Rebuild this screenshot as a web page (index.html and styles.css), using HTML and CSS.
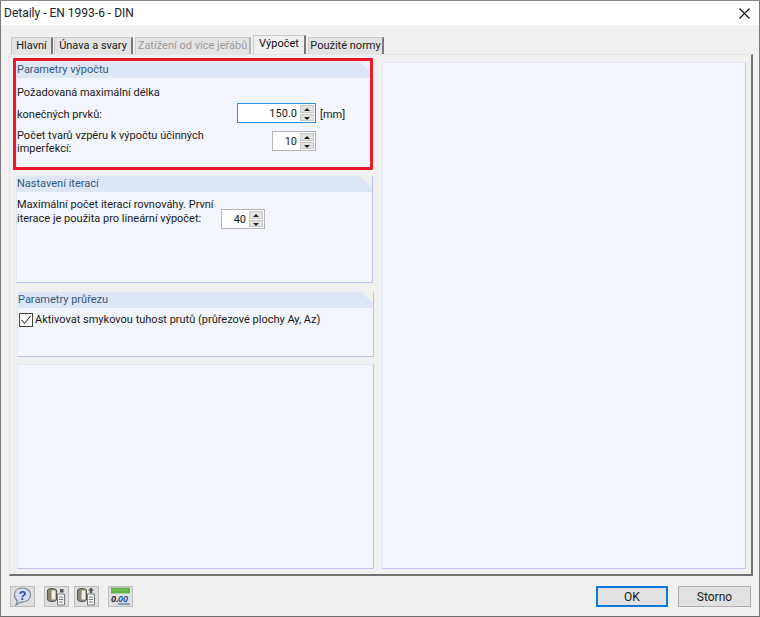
FILE: index.html
```html
<!DOCTYPE html>
<html lang="cs">
<head>
<meta charset="utf-8">
<title>Detaily - EN 1993-6 - DIN</title>
<link rel="stylesheet" href="styles.css">
</head>
<body>
<div class="window">
  <header class="titlebar">
    <span class="title">Detaily - EN 1993-6 - DIN</span>
    <svg class="close" width="11" height="11" viewBox="0 0 11 11"><path d="M0.5 0.5L10.5 10.5M10.5 0.5L0.5 10.5" stroke="#111" stroke-width="1.1" fill="none"/></svg>
  </header>
  <div class="body">
    <nav class="tabs">
      <span class="tab t-hlavni">Hlavní</span>
      <span class="tab t-unava">Únava a svary</span>
      <span class="tab t-zatizeni disabled">Zatížení od více jeřábů</span>
      <span class="tab t-vypocet active">Výpočet</span>
      <span class="tab t-normy">Použité normy</span>
    </nav>
    <div class="tabpanel">
      <div class="col-left">
        <section class="group g1">
          <h2 class="group-head">Parametry výpočtu</h2>
          <div class="row r-a">Požadovaná maximální délka</div>
          <div class="row r-b">
            <span class="lbl lbl-len">konečných prvků:</span>
            <span class="spin spin-focus spin-w79"><span class="val">150.0</span><span class="arrows"><i class="up"></i><i class="down"></i></span></span>
            <span class="unit">[mm]</span>
          </div>
          <div class="row r-c">
            <span class="lbl lbl-two">Počet tvarů vzpěru k výpočtu účinných<br>imperfekcí:</span>
            <span class="spin spin-w44 spin-c"><span class="val">10</span><span class="arrows"><i class="up"></i><i class="down"></i></span></span>
          </div>
          <div class="highlight"></div>
        </section>
        <section class="group g2">
          <h2 class="group-head">Nastavení iterací</h2>
          <div class="row r-d">
            <span class="lbl lbl-iter">Maximální počet iterací rovnováhy. První<br>iterace je použita pro lineární výpočet:</span>
            <span class="spin spin-w44 spin-d"><span class="val">40</span><span class="arrows"><i class="up"></i><i class="down"></i></span></span>
          </div>
        </section>
        <section class="group g3">
          <h2 class="group-head">Parametry průřezu</h2>
          <label class="check">
            <svg class="checkbox" width="14" height="14" viewBox="0 0 14 14"><rect x="0.5" y="0.5" width="13" height="13" fill="#fff" stroke="#444"/><path d="M2.500 7L5.500 10.500L11.500 3" stroke="#444" stroke-width="1.1" fill="none"/></svg>
            <span>Aktivovat smykovou tuhost prutů (průřezové plochy Ay, Az)</span>
          </label>
        </section>
        <section class="group g4"></section>
      </div>
      <div class="col-right"></div>
    </div>
    <footer class="footer">
      <div class="tools">
        <button class="tool"><svg width="21" height="19" viewBox="0 0 21 19"><path d="M10.500 1C5.500 1 2.500 4 2.500 8C2.500 10.500 3.500 12.500 5.500 13.700L4 18L9 15C14.500 15.500 18.500 12.500 18.500 8C18.500 4 15.500 1 10.500 1Z" fill="#d4def0" stroke="#7d8799" stroke-width="1.200"/><text x="10.500" y="13" class="q">?</text></svg></button>
        <button class="tool tool-gap"><svg width="21" height="19" viewBox="0 0 21 19"><path d="M1.500 3C3 1 9 1 10.500 3V13C9 15 3 15 1.500 13Z" fill="#8d8576" stroke="#55504a"/><path d="M5.500 3.500H9.500V12.500H5.500Z" fill="#f0eee8"/><path d="M11.500 7H18.500V18H11.500Z" fill="#f6f6f6" stroke="#77797c"/><path d="M13 10H17M13 12.500H17M13 15H17" stroke="#77797c"/><path d="M14 2H17.500V5.500H14Z" fill="#5a5a5a"/></svg></button>
        <button class="tool tool-near"><svg width="21" height="19" viewBox="0 0 21 19"><path d="M1.500 3C3 1 9 1 10.500 3V13C9 15 3 15 1.500 13Z" fill="#8d8576" stroke="#55504a"/><path d="M5.500 3.500H9.500V12.500H5.500Z" fill="#f0eee8"/><path d="M11.500 7H18.500V18H11.500Z" fill="#f6f6f6" stroke="#77797c"/><path d="M13 10H17M13 12.500H17M13 15H17" stroke="#77797c"/><path d="M15 0.500L18 3.500H16.200V6H13.800V3.500H12Z" fill="#5a5a5a"/></svg></button>
        <button class="tool tool-gap"><svg width="21" height="19" viewBox="0 0 21 19"><rect x="1.500" y="1" width="18" height="5" fill="#63b84a" stroke="#4a9a38" stroke-width=".6"/><path d="M4 2V3.500M7 2V3.500M10 2V3.500M13 2V3.500M16 2V3.500" stroke="#a6dc90" stroke-width=".8"/><text x="1" y="15" class="zero">0.</text><text x="8" y="15" class="zero zero-blue">00</text><path d="M8 17H20" stroke="#2b4fa8"/></svg></button>
      </div>
      <div class="actions">
        <button class="btn btn-default">OK</button>
        <button class="btn btn-cancel">Storno</button>
      </div>
    </footer>
  </div>
</div>
</body>
</html>
```
FILE: styles.css
```css
* { box-sizing: border-box; }
html, body { margin: 0; padding: 0; width: 760px; height: 617px; overflow: hidden; }
body { font-family: Roboto, "Open Sans", sans-serif; font-size: 11px; color: #1a1a1a; background: #f0f0f0; }
.window { width: 760px; height: 617px; display: flex; flex-direction: column; border: 1px solid #7a7a7a; border-top-color: #8a8a8a; border-bottom: 1px solid #6e6e6e; }
.titlebar { height: 24px; background: #fff; display: flex; align-items: center; justify-content: space-between; padding: 0 9px 0 3px; flex: none; }
.title { font-size: 12px; color: #222; }
.body { flex: 1; display: flex; flex-direction: column; padding: 10px 6px 0 8px; min-height: 0; }
.tabs { display: flex; height: 19px; padding-left: 2px; align-items: flex-end; flex: none; position: relative; z-index: 1; }
.tab { height: 17px; margin-right: 2px; background: #e3e3e3; border: 1px solid #cacaca; border-right: 2px solid #777; border-bottom: 0; line-height: 15px; white-space: nowrap; text-align: center; }
.tab.disabled { color: #9b9b9b; border-right-color: #b5b5b5; }
.tab.active { height: 19px; background: #f0f0f0; line-height: 16px; color: #111; }
.t-hlavni { width: 42px; margin-right: 1px; }
.t-unava { width: 79px; }
.t-zatizeni { width: 116px; }
.t-vypocet { width: 53px; }
.t-normy { width: 76px; margin-right: 0; }
.tabpanel { height: 522px; flex: none; border-top: 1px solid #e4e4e4; border-left: 1px solid #e4e4e4; border-right: 2px solid #717171; border-bottom: 2px solid #717171; padding: 7px 5px 5px 6px; display: flex; gap: 8px; background: #f0f0f0; }
.col-left { width: 358px; display: flex; flex-direction: column; flex: none; }
.col-right { flex: 1; background: #f2f5fb; border: 1px solid #dfe6f4; border-right-color: #c0c3ee; border-bottom-color: #c0c3ee; }
.group { background: #f2f5fb; border-right: 1px solid #c0c3ee; border-bottom: 1px solid #c0c3ee; border-left: 1px solid #dfe6f4; flex: none; position: relative; }
.group-head { margin: 0; height: 16px; font-weight: 400; font-size: 11px; line-height: 16px; color: #36587f; background: linear-gradient(225deg, #f0f0f0 0, #f0f0f0 8px, #dde6f4 8px); }
.g1 { height: 107px; margin-right: 1px; }
.g2 { height: 107px; margin-top: 7px; margin-right: 1px; }
.g3 { height: 65px; margin-top: 9px; margin-left: 1px; }
.g4 { flex: 1; margin-top: 7px; margin-left: 1px; border-top: 1px solid #dfe6f4; }
.highlight { position: absolute; top: -4px; left: -4px; right: -1px; bottom: -2px; border: 3px solid #e8192c; border-radius: 1px; pointer-events: none; }
.row { display: flex; align-items: center; }
.r-a { margin-top: 6px; height: 17px; }
.r-b { margin-top: 2px; height: 20px; }
.r-c { margin-top: 8px; height: 20px; }
.r-d { margin-top: 6px; align-items: flex-start; }
.lbl { display: block; line-height: 13px; flex: none; white-space: nowrap; }
.lbl-len { width: 220px; padding-top: 3px; }
.lbl-two { width: 200px; padding-top: 2px; }
.lbl-iter { width: 204px; line-height: 14px; }
.unit { margin-left: 4px; padding-top: 2px; }
.spin { display: inline-flex; height: 20px; background: #fff; border: 1px solid #b5b5b5; flex: none; }
.spin-w79 { width: 79px; }
.spin-w44 { width: 44px; }
.spin-c { margin-left: 55px; }
.spin-d { margin-top: 11px; }
.spin-focus { border: 1px solid #2f8fdc; }
.val { flex: 1; text-align: right; padding-right: 3px; line-height: 20px; }
.arrows { width: 15px; display: flex; flex-direction: column; gap: 1px; flex: none; padding: 1px 1px 1px 0; }
.arrows i { flex: 1; background: #e2e2e2; border: 1px solid #c9c9c9; position: relative; }
.arrows i::after { content: ""; position: absolute; left: 3px; top: 2px; border-left: 3px solid transparent; border-right: 3px solid transparent; }
.arrows .up::after { border-bottom: 3px solid #222; }
.arrows .down::after { border-top: 3px solid #222; }
.check { display: flex; align-items: center; gap: 2px; margin: 5px 0 0 1px; line-height: 14px; }
.checkbox { flex: none; }
.footer { flex: 1; display: flex; justify-content: space-between; align-items: flex-start; padding: 10px 2px 0 1px; min-height: 0; }
.tools { display: flex; }
.tool { width: 25px; height: 21px; padding: 0; background: #dfdfdf; border: 1px solid #bdbdbd; display: flex; align-items: center; justify-content: center; }
.tool-gap { margin-left: 9px; }
.tool-near { margin-left: 5px; }
.q { font: 700 13px "Liberation Sans", sans-serif; fill: #2b4fa8; text-anchor: middle; }
.zero { font: 700 italic 9px "Liberation Sans", sans-serif; fill: #222; }
.zero-blue { fill: #2b4fa8; }
.actions { display: flex; gap: 10px; }
.btn { height: 21px; padding: 0; background: #e1e1e1; border: 1px solid #adadad; font: 12px Roboto, "Open Sans", sans-serif; color: #1a1a1a; }
.btn-default { width: 72px; border: 2px solid #0f78d4; }
.btn-cancel { width: 73px; }
```
